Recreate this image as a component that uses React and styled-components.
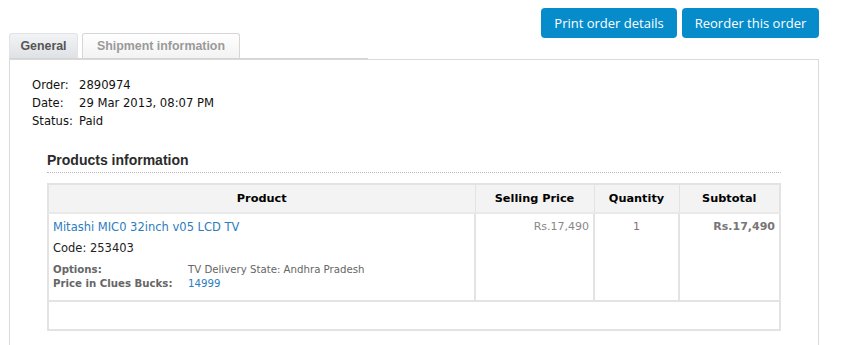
import styled, { createGlobalStyle } from 'styled-components';

const GlobalStyle = createGlobalStyle`
  html, body {
    margin: 0;
    padding: 0;
    background: #fff;
  }
  body {
    font-family: "DejaVu Sans", Verdana, sans-serif;
    color: #222;
  }
`;

const order = {
  id: '2890974',
  date: '29 Mar 2013, 08:07 PM',
  status: 'Paid',
};

const product = {
  name: 'Mitashi MIC0 32inch v05 LCD TV',
  code: '253403',
  price: 'Rs.17,490',
  qty: 1,
  subtotal: 'Rs.17,490',
  options: [
    { label: 'Options:', value: 'TV Delivery State: Andhra Pradesh' },
    { label: 'Price in Clues Bucks:', value: '14999', link: true },
  ],
};

const App = () => {
  return (
    <Page>
      <GlobalStyle />
      <Toolbar>
        <ActionButton $width={136}>Print order details</ActionButton>
        <ActionButton $width={137}>Reorder this order</ActionButton>
      </Toolbar>
      <Tabs>
        <Tab $active>General</Tab>
        <Tab>Shipment information</Tab>
      </Tabs>
      <Panel>
        <InfoList>
          <InfoRow><dt>Order:</dt><dd>{order.id}</dd></InfoRow>
          <InfoRow><dt>Date:</dt><dd>{order.date}</dd></InfoRow>
          <InfoRow><dt>Status:</dt><dd>{order.status}</dd></InfoRow>
        </InfoList>
        <Section>
          <SectionTitle>Products information</SectionTitle>
          <Table>
            <colgroup>
              <col style={{ width: 427 }} />
              <col style={{ width: 119 }} />
              <col style={{ width: 85 }} />
              <col />
            </colgroup>
            <thead>
              <tr>
                <Th>Product</Th>
                <Th>Selling Price</Th>
                <Th>Quantity</Th>
                <Th>Subtotal</Th>
              </tr>
            </thead>
            <tbody>
              <tr>
                <Td>
                  <ProductLink href="#">{product.name}</ProductLink>
                  <Code>Code: {product.code}</Code>
                  <Options>
                    {product.options.map((o) => (
                      <OptionRow key={o.label}>
                        <OptionLabel>{o.label}</OptionLabel>
                        <OptionValue $link={o.link}>{o.value}</OptionValue>
                      </OptionRow>
                    ))}
                  </Options>
                </Td>
                <Td $align="right"><Price>{product.price}</Price></Td>
                <Td $align="center"><Qty>{product.qty}</Qty></Td>
                <Td $align="right"><Subtotal>{product.subtotal}</Subtotal></Td>
              </tr>
              <EmptyRow>
                <td colSpan={4}></td>
              </EmptyRow>
            </tbody>
          </Table>
        </Section>
      </Panel>
    </Page>
  );
};

const Page = styled.div`
  width: 810px;
  padding-left: 9px;
  height: 345px;
  overflow: hidden;
`;

const Toolbar = styled.div`
  display: flex;
  justify-content: flex-end;
  gap: 5px;
  padding-top: 8px;
  margin-bottom: -5px;
`;

const ActionButton = styled.button`
  width: ${(p) => p.$width}px;
  height: 30px;
  padding: 0;
  border: none;
  border-radius: 4px;
  background: #068ccb;
  color: #fff;
  font-family: "Open Sans", sans-serif;
  font-size: 13px;
  white-space: nowrap;
  cursor: pointer;
`;

const Tabs = styled.div`
  display: flex;
  gap: 4px;
  width: 359px;
  height: 25px;
  border-bottom: 1px solid #d4d4d4;
`;

const Tab = styled.div`
  display: flex;
  align-items: center;
  justify-content: center;
  width: ${(p) => (p.$active ? '67px' : '156px')};
  border: 1px solid ${(p) => (p.$active ? '#e1e3e6' : '#d6d6d6')};
  border-bottom: none;
  border-radius: 3px 3px 0 0;
  background: ${(p) =>
    p.$active
      ? 'linear-gradient(#f2f3f4, #dfe2e5)'
      : 'linear-gradient(#ffffff, #f3f3f3)'};
  color: ${(p) => (p.$active ? '#555' : '#9a9a9a')};
  font-family: "Liberation Sans", Arial, sans-serif;
  font-weight: bold;
  font-size: 12.4px;
`;

const Panel = styled.div`
  border: 1px solid #dadada;
  border-bottom: none;
  padding: 16px 37px 20px 22px;
  min-height: 270px;
`;

const InfoList = styled.dl`
  margin: 0;
  font-size: 11.6px;
  color: #111;
`;

const InfoRow = styled.div`
  display: flex;
  height: 18px;
  align-items: center;

  dt {
    width: 47px;
  }

  dd {
    margin: 0;
  }
`;

const Section = styled.div`
  margin-top: 22px;
  padding-left: 15px;
`;

const SectionTitle = styled.h3`
  margin: 0 0 10px;
  padding-bottom: 4px;
  border-bottom: 1px dotted #b5b5b5;
  font-family: "Liberation Sans", Arial, sans-serif;
  font-size: 14px;
  font-weight: bold;
  color: #2b2b2b;
`;

const Table = styled.table`
  width: 734px;
  border-collapse: collapse;
  table-layout: fixed;
  border: 2px solid #e3e3e3;
  font-size: 11px;
`;

const Th = styled.th`
  height: 27px;
  padding: 0 8px;
  background: #f3f3f3;
  border: 1px solid #e2e2e2;
  border-bottom: 2px solid #e9e9e9;
  color: #000;
  font-size: 11.3px;
  font-weight: bold;
  text-align: center;
`;

const Td = styled.td`
  vertical-align: top;
  padding: 6px 4px 0 4px;
  height: 80px;
  border: 2px solid #e3e3e3;
  border-top: none;
  text-align: ${(p) => p.$align || 'left'};
`;

const ProductLink = styled.a`
  display: block;
  color: #2d7cc0;
  font-size: 11.5px;
  text-decoration: none;
`;

const Code = styled.div`
  margin-top: 7px;
  font-size: 11.5px;
  color: #222;
`;

const Options = styled.div`
  margin-top: 9px;
  font-size: 10.2px;
`;

const OptionRow = styled.div`
  display: flex;
  height: 14px;
`;

const OptionLabel = styled.span`
  width: 135px;
  color: #666;
  font-weight: bold;
`;

const OptionValue = styled.span`
  color: ${(p) => (p.$link ? '#2d7cc0' : '#666')};
`;

const Price = styled.span`
  color: #888;
`;

const Qty = styled.span`
  color: #8c7070;
`;

const Subtotal = styled.span`
  color: #777;
  font-weight: bold;
`;

const EmptyRow = styled.tr`
  td {
    height: 25px;
    border-top: 1px solid #e8e8e8;
  }
`;

export default App;
